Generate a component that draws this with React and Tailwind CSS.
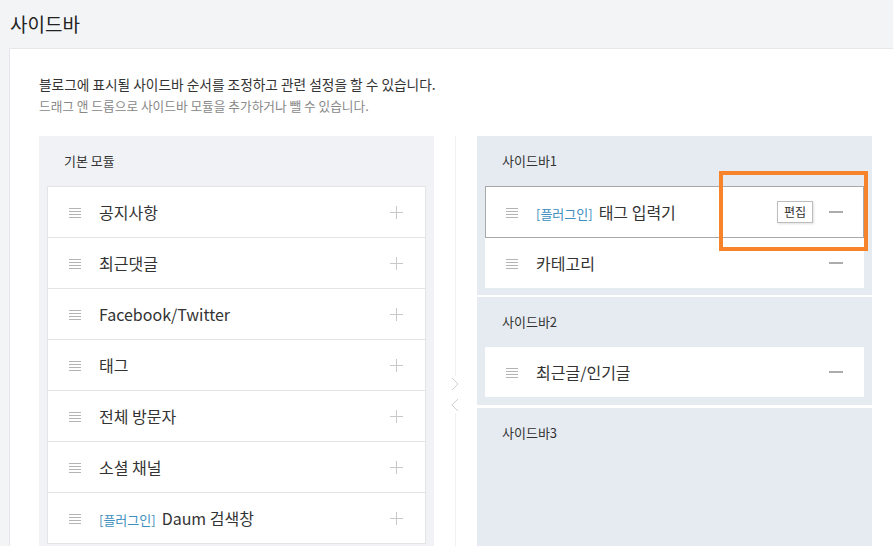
import React from 'react'

const FONT = { fontFamily: '"Noto Sans CJK KR", "Noto Sans", sans-serif' }

const BASIC = [
  { name: '공지사항' },
  { name: '최근댓글' },
  { name: 'Facebook/Twitter' },
  { name: '태그' },
  { name: '전체 방문자' },
  { name: '소셜 채널' },
  { name: 'Daum 검색창', plugin: true },
]

function Handle() {
  return (
    <svg width="12" height="11" viewBox="0 0 12 11" className="shrink-0">
      <g stroke="#b4b4b4" strokeWidth="1">
        <line x1="0" y1="1.5" x2="12" y2="1.5" />
        <line x1="0" y1="4.5" x2="12" y2="4.5" />
        <line x1="0" y1="7.5" x2="12" y2="7.5" />
        <line x1="0" y1="10.5" x2="12" y2="10.5" />
      </g>
    </svg>
  )
}

function Plus() {
  return (
    <svg width="13" height="13" viewBox="0 0 13 13">
      <g stroke="#c8c8c8" strokeWidth="1">
        <line x1="0" y1="6.5" x2="13" y2="6.5" />
        <line x1="6.5" y1="0" x2="6.5" y2="13" />
      </g>
    </svg>
  )
}

function Minus() {
  return (
    <svg width="14" height="2" viewBox="0 0 14 2">
      <line x1="0" y1="1" x2="14" y2="1" stroke="#5a5a5a" strokeWidth="1" />
    </svg>
  )
}

function Label({ name, plugin }) {
  return (
    <span className="text-[16px] text-[#333] leading-none">
      {plugin && <span className="text-[13px] text-[#3d8fc0] mr-[6px]">[플러그인]</span>}
      {name}
    </span>
  )
}

function BasicRow({ item }) {
  return (
    <div className="h-[51px] flex items-center border-b border-[#e4e4e4] pl-[21px] pr-[22px]">
      <Handle />
      <div className="ml-[18px] flex-1">
        <Label {...item} />
      </div>
      <Plus />
    </div>
  )
}

function SideRow({ item, active }) {
  return (
    <div
      className={
        active
          ? 'h-[52px] flex items-center border border-[#a8a8a8] bg-white pl-[20px] pr-[20px]'
          : 'h-[50px] flex items-center bg-white pl-[21px] pr-[21px]'
      }
    >
      <Handle />
      <div className="ml-[18px] flex-1">
        <Label {...item} />
      </div>
      {active && (
        <span className="mr-[16px] h-[22px] px-[6px] flex items-center border border-[#bdbdbd] text-[12px] text-[#333] shadow-[1px_1px_2px_rgba(0,0,0,0.12)]">
          편집
        </span>
      )}
      <Minus />
    </div>
  )
}

function SideGroup({ title, children, className, inset }) {
  return (
    <div className={'bg-[#e6ebf1] ' + className}>
      <div
        className={
          'h-[50px] flex items-center text-[13px] text-[#333] ' + (inset ? 'pl-[17px]' : 'pl-[25px]')
        }
      >
        {title}
      </div>
      {children}
    </div>
  )
}

function Chevron({ dir }) {
  return (
    <svg width="8" height="14" viewBox="0 0 8 14">
      <polyline
        points={dir === 'right' ? '1,1 7,7 1,13' : '7,1 1,7 7,13'}
        fill="none"
        stroke="#cfcfcf"
        strokeWidth="1"
      />
    </svg>
  )
}

export default function App() {
  return (
    <div className="w-[893px] h-[546px] overflow-hidden bg-[#f3f4f6]" style={FONT}>
      <div className="h-[48px] flex items-center pl-[10px] text-[19px] text-[#222]">사이드바</div>
      <div className="ml-[9px] h-[498px] bg-white border-l border-t border-[#e6e7ea] pl-[29px] pt-[25px]">
        <p className="text-[13.7px] text-[#333] leading-[20px]">
          블로그에 표시될 사이드바 순서를 조정하고 관련 설정을 할 수 있습니다.
        </p>
        <p className="text-[12.7px] text-[#888] leading-[20px] mt-[2px]">
          드래그 앤 드롭으로 사이드바 모듈을 추가하거나 뺄 수 있습니다.
        </p>

        <div className="flex mt-[20px]">
          {/* basic modules */}
          <div className="w-[395px] h-[420px] bg-[#f1f2f5] px-[8px]">
            <div className="h-[50px] flex items-center pl-[17px] text-[13px] text-[#333]">기본 모듈</div>
            <div className="bg-white border-x border-t border-[#e4e4e4]">
              {BASIC.map((it) => (
                <BasicRow key={it.name} item={it} />
              ))}
            </div>
          </div>

          {/* divider with arrows */}
          <div className="w-[43px] flex justify-center">
            <div className="w-px bg-[#f1f1f1] relative h-full">
              <div className="absolute left-[-4px] top-[240px] flex flex-col gap-[7px] bg-white py-[1px]">
                <Chevron dir="right" />
                <Chevron dir="left" />
              </div>
            </div>
          </div>

          {/* sidebars */}
          <div className="w-[395px] flex flex-col relative">
            <SideGroup title="사이드바1" className="px-[8px] pb-[7px]" inset>
              <SideRow item={{ name: '태그 입력기', plugin: true }} active />
              <SideRow item={{ name: '카테고리' }} />
            </SideGroup>
            <SideGroup title="사이드바2" className="mt-[2px] px-[8px] pb-[8px]" inset>
              <SideRow item={{ name: '최근글/인기글' }} />
            </SideGroup>
            <SideGroup title="사이드바3" className="mt-[3px] flex-1" />

            <div className="absolute left-[242px] top-[35px] w-[149px] h-[80px] border-[4px] border-[#f7842b]" />
          </div>
        </div>
      </div>
    </div>
  )
}
